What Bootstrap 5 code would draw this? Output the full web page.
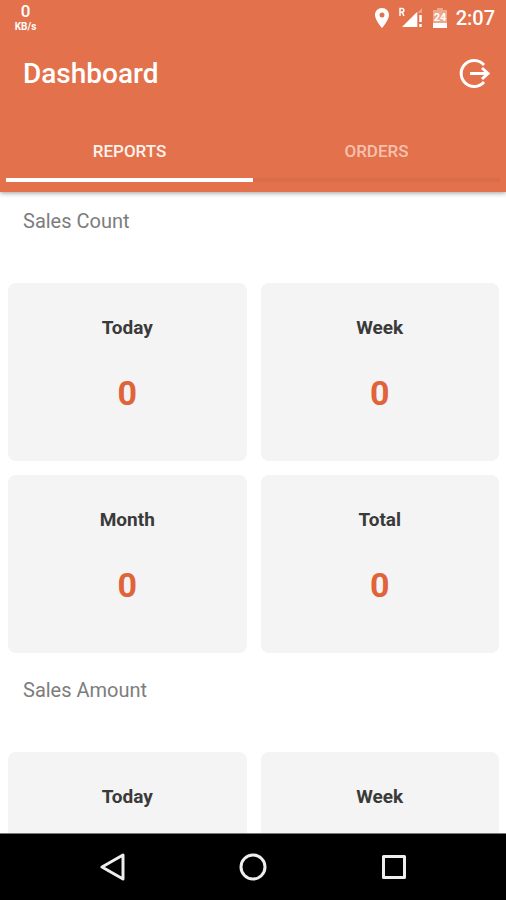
<!DOCTYPE html>
<html lang="en">
<head>
<meta charset="utf-8">
<meta name="viewport" content="width=device-width, initial-scale=1">
<title>Dashboard</title>
<link href="https://cdn.jsdelivr.net/npm/bootstrap@5.3.0/dist/css/bootstrap.min.css" rel="stylesheet">
<style>
body { font-family: Roboto, "Liberation Sans", sans-serif; }
.app-header { background: #e2714c; box-shadow: 0 1px 5px rgba(0,0,0,.4); }
.status-bar { height: 36px; padding: 0 11px 0 13px; }
.net-speed { width: 25px; padding-bottom: 2px; font-size: 10px; line-height: 12px; font-weight: 700; }
.net-speed b { font-size: 17px; line-height: 20px; font-weight: 500; }
.clock { font-size: 20px; line-height: 24px; font-weight: 500; }
.status-icons { gap: 8px; }
.title-bar { height: 75px; padding: 0 15px 0 23px; }
.app-title { font-size: 28px; line-height: 32px; font-weight: 500; }
.report-tabs { padding: 0 6px 10px; }
.report-tabs .nav-link { height: 71px; padding: 12px 0 0; color: #f6c1ac; background: none; font-size: 17px; line-height: 24px; font-weight: 500; border: 0; border-bottom: 4px solid #db6c48; border-radius: 0; }
.report-tabs .nav-link.active { color: #fff2ec; background: none; border-color: #fff; }
.reports { min-height: 0; padding: 0 7px 0 8px; }
.section-title { height: 91px; padding: 17px 15px 0; color: #7d7d7d; font-size: 20px; line-height: 24px; font-weight: 400; }
.tiles { --bs-gutter-x: 14px; --bs-gutter-y: 14px; padding-bottom: 8px; }
.tile { height: 178px; padding-top: 33px; background: #f4f4f4; border: 0; border-radius: 8px; }
.tile-label { font-size: 19px; line-height: 24px; font-weight: 700; color: #3a3a3a; }
.tile-value { margin-top: 33px; font-size: 34px; line-height: 40px; font-weight: 700; color: #e0633a; }
.system-nav { height: 67px; border-top: 1px solid #777; }
.system-nav .btn { width: 141px; --bs-btn-border-width: 0; }
</style>
</head>
<body>
<div class="vh-100 d-flex flex-column overflow-hidden bg-white">
  <header class="app-header flex-shrink-0 text-white position-relative">
    <div class="status-bar d-flex justify-content-between align-items-center">
      <div class="net-speed d-flex flex-column align-items-center"><b>0</b><span>KB/s</span></div>
      <div class="status-icons d-flex align-items-center">
        <svg width="16" height="22" viewBox="0 0 16 22" fill="#fff" aria-hidden="true"><path fill-rule="evenodd" d="M8 1C4 1 1 4 1 8c0 5 7 13 7 13s7-8 7-13c0-4-3-7-7-7zm0 4.500a2.500 2.500 0 1 1 0 5 2.500 2.500 0 0 1 0-5z"/></svg>
        <svg width="26" height="24" viewBox="0 0 26 24" aria-hidden="true"><path d="M18 8 24 2v5h-4v14h-2z" fill="#fff" opacity=".35"/><path d="M4 21 19 6v15z" fill="#fff"/><path d="M22.500 9v7M22.500 18v3" stroke="#fff" stroke-width="2.500"/><path d="M2 10V2.500h2a1.800 1.800 0 0 1 0 3.700H2M4 6.200 6 10" fill="none" stroke="#fff" stroke-width="1.500"/></svg>
        <svg width="16" height="22" viewBox="0 0 16 22" role="img" aria-label="Battery"><path d="M5 1h6v2h4v13H1V3h4z" fill="#efa78c"/><path d="M1 16h14v5H1z" fill="#fff"/><text x="8" y="14" text-anchor="middle" font-family="Roboto, sans-serif" font-size="11" font-weight="700" fill="#fff">24</text></svg>
        <span class="clock">2:07</span>
      </div>
    </div>
    <div class="title-bar d-flex justify-content-between align-items-center">
      <h1 class="app-title m-0">Dashboard</h1>
      <button type="button" class="btn p-0 border-0 d-flex" aria-label="Log out">
        <svg width="32" height="32" viewBox="0 0 32 32" fill="none" stroke="#fff" stroke-width="3"><path d="M25 7A13 13 0 1 0 25 24"/><path d="M11 15.500h17M23 10l6 5.500-6 5.500"/></svg>
      </button>
    </div>
    <div class="report-tabs nav nav-justified" role="tablist">
      <button type="button" class="nav-link nav-item active" role="tab" aria-selected="true" data-bs-toggle="tab" data-bs-target="#reports">REPORTS</button>
      <button type="button" class="nav-link nav-item" role="tab" aria-selected="false">ORDERS</button>
    </div>
  </header>
  <main id="reports" class="reports flex-fill overflow-hidden" role="tabpanel">
    <section>
      <h2 class="section-title m-0">Sales Count</h2>
      <div class="tiles row row-cols-2 text-center">
        <div class="col"><div class="card tile"><div class="tile-label">Today</div><div class="tile-value">0</div></div></div>
        <div class="col"><div class="card tile"><div class="tile-label">Week</div><div class="tile-value">0</div></div></div>
        <div class="col"><div class="card tile"><div class="tile-label">Month</div><div class="tile-value">0</div></div></div>
        <div class="col"><div class="card tile"><div class="tile-label">Total</div><div class="tile-value">0</div></div></div>
      </div>
    </section>
    <section>
      <h2 class="section-title m-0">Sales Amount</h2>
      <div class="tiles row row-cols-2 text-center">
        <div class="col"><div class="card tile"><div class="tile-label">Today</div></div></div>
        <div class="col"><div class="card tile"><div class="tile-label">Week</div></div></div>
      </div>
    </section>
  </main>
  <nav class="system-nav flex-shrink-0 bg-black d-flex justify-content-center align-items-center" aria-label="System">
    <button type="button" class="btn p-0" aria-label="Back"><svg width="28" height="28" viewBox="0 0 28 28" fill="none" stroke="#eee" stroke-width="3" stroke-linejoin="round"><path d="M25 2v24L4 14z"/></svg></button>
    <button type="button" class="btn p-0" aria-label="Home"><svg width="28" height="28" viewBox="0 0 28 28" fill="none" stroke="#eee" stroke-width="3"><circle cx="14" cy="14" r="12"/></svg></button>
    <button type="button" class="btn p-0" aria-label="Recent apps"><svg width="28" height="28" viewBox="0 0 28 28" fill="none" stroke="#eee" stroke-width="3" stroke-linejoin="round"><path d="M3.500 3.500h21v21h-21z"/></svg></button>
  </nav>
</div>
<script src="https://cdn.jsdelivr.net/npm/bootstrap@5.3.0/dist/js/bootstrap.bundle.min.js"></script>
</body>
</html>
